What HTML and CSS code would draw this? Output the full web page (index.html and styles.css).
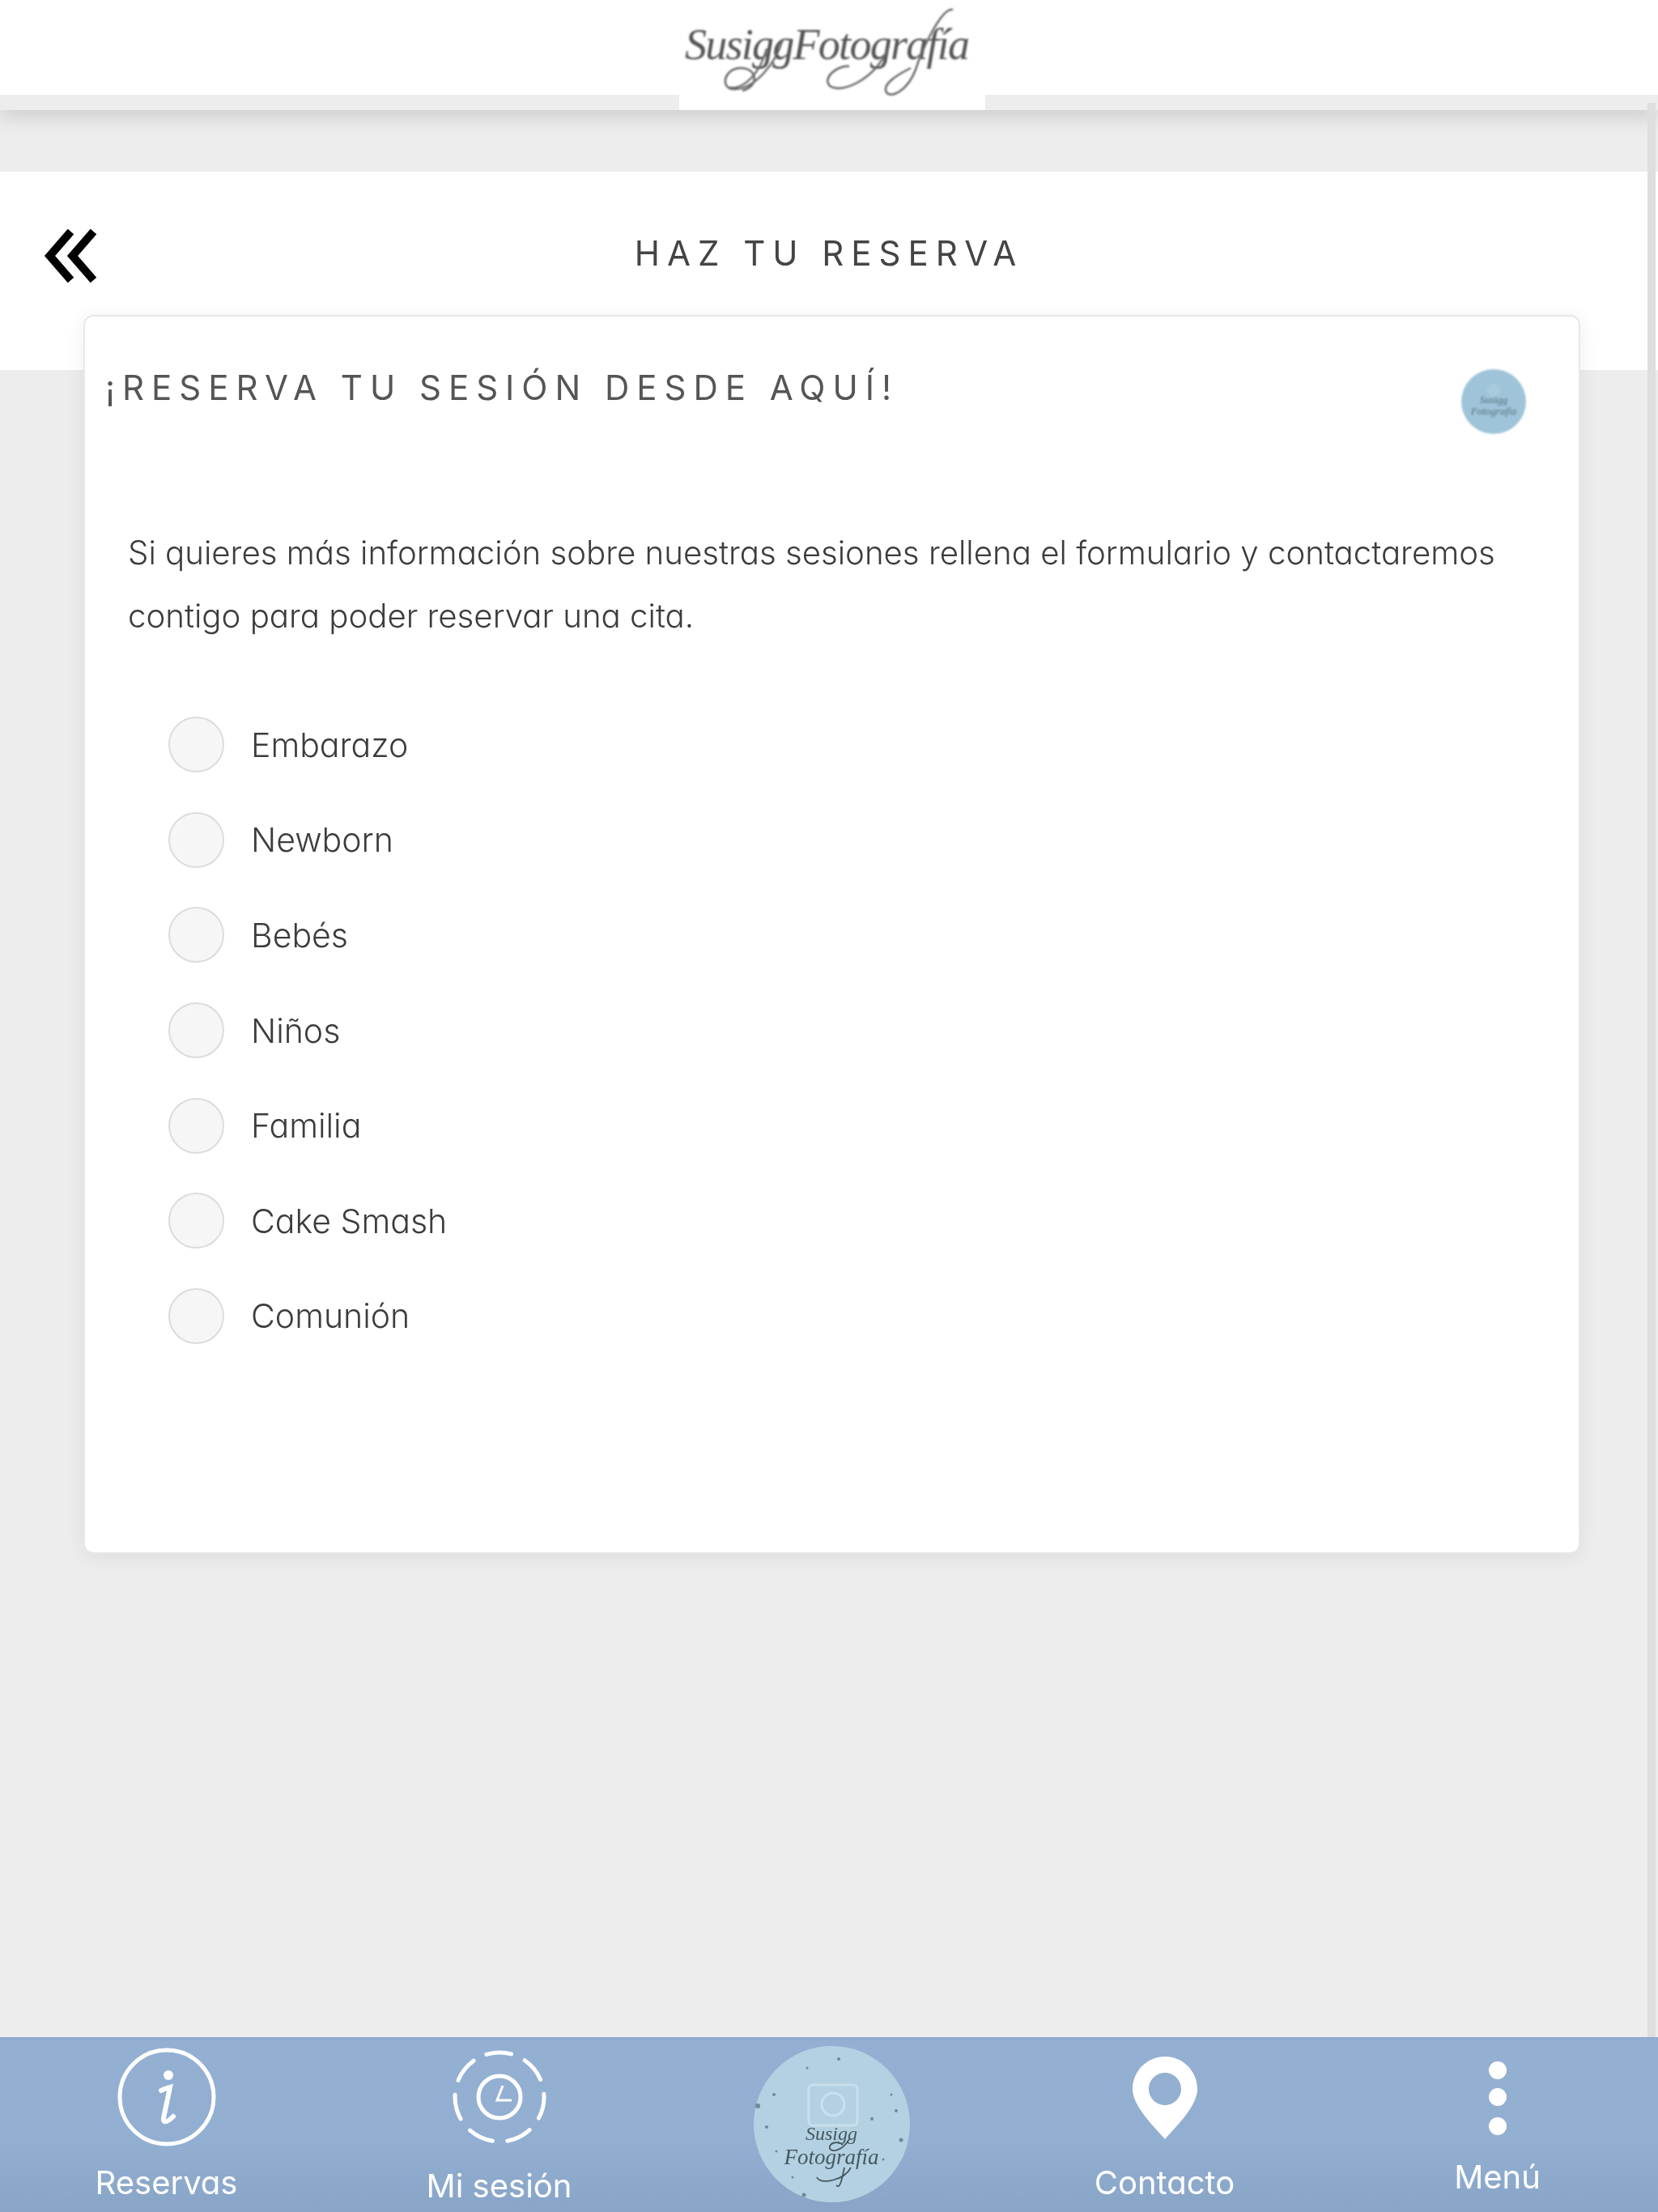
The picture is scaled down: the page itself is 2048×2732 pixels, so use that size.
FILE: index.html
```html
<!DOCTYPE html>
<html lang="es">
<head>
<meta charset="utf-8">
<title>Haz tu reserva</title>
<link rel="stylesheet" href="styles.css">
</head>
<body>
<div class="app">
  <header class="topbar">
    <div class="topbar-white"></div>
    <div class="logo-box">
      <svg class="logo" viewBox="0 0 378 136" aria-label="Susigg Fotografía">
        <text class="logo-text" x="7" y="73" textLength="352" lengthAdjust="spacing">SusiggFotografía</text>
        <path class="logo-swash" d="M128 48C120 78 92 112 66 110C50 108 56 84 76 84C96 84 100 106 78 112M108 60C100 90 80 112 60 108M258 60C240 100 200 116 186 106C176 96 196 80 210 82M338 12C325 8 300 60 292 86C282 112 262 122 256 114C250 104 270 92 286 84" />
      </svg>
    </div>
  </header>

  <div class="scroll-track"></div>

  <section class="title-band">
    <svg class="back" viewBox="0 0 66 68"><path d="M34 4L8 34L34 64M62 4L36 34L62 64"/></svg>
    <h1 class="page-title">HAZ TU RESERVA</h1>
  </section>

  <main class="card">
    <div class="card-head">
      <h2 class="card-title">¡RESERVA TU SESIÓN DESDE AQUÍ!</h2>
      <svg class="mini-avatar" viewBox="0 0 80 80">
        <circle class="mini-disc" cx="40" cy="40" r="40"/>
        <circle class="mini-cam" cx="40" cy="26" r="8"/>
        <text class="mini-text" x="40" y="42">Susigg</text>
        <text class="mini-text" x="40" y="56">Fotografía</text>
      </svg>
    </div>
    <p class="intro">Si quieres más información sobre nuestras sesiones rellena el formulario y contactaremos contigo para poder reservar una cita.</p>
    <ul class="options">
      <li class="option"><span class="radio"></span><span class="option-label">Embarazo</span></li>
      <li class="option"><span class="radio"></span><span class="option-label">Newborn</span></li>
      <li class="option"><span class="radio"></span><span class="option-label">Bebés</span></li>
      <li class="option"><span class="radio"></span><span class="option-label">Niños</span></li>
      <li class="option"><span class="radio"></span><span class="option-label">Familia</span></li>
      <li class="option"><span class="radio"></span><span class="option-label">Cake Smash</span></li>
      <li class="option"><span class="radio"></span><span class="option-label">Comunión</span></li>
    </ul>
  </main>

  <nav class="tabbar">
    <div class="tab">
      <svg class="tab-icon" viewBox="0 0 130 130">
        <circle class="line" cx="65" cy="64" r="58"/>
        <circle class="solid" cx="67" cy="37" r="6"/>
        <path class="line-i" d="M58 56C62 54 66 53 69 52L61 90C60 96 65 96 73 88"/>
      </svg>
      <span class="tab-label">Reservas</span>
    </div>
    <div class="tab">
      <svg class="tab-icon" viewBox="0 0 130 130">
        <circle class="dash-ring" cx="65" cy="64" r="55" transform="rotate(-107 65 64)"/>
        <circle class="line" cx="65" cy="64" r="26"/>
        <path class="hands" d="M69 50L62 68H80"/>
      </svg>
      <span class="tab-label tab-label-low">Mi sesión</span>
    </div>
    <div class="tab">
      <svg class="hub" viewBox="0 0 193 193">
        <circle class="hub-disc" cx="96.500" cy="96.500" r="96.500"/>
        <g class="hub-dots">
          <circle cx="105" cy="16" r="2"/><circle cx="66" cy="27" r="1.500"/><circle cx="25" cy="60" r="2"/>
          <circle cx="5" cy="74" r="3"/><circle cx="16" cy="100" r="2"/><circle cx="28" cy="130" r="1.500"/>
          <circle cx="170" cy="60" r="1.500"/><circle cx="176" cy="80" r="2"/><circle cx="146" cy="90" r="2"/>
          <circle cx="182" cy="116" r="2.500"/><circle cx="48" cy="162" r="1.500"/><circle cx="62" cy="184" r="2.500"/>
          <circle cx="160" cy="140" r="1.500"/>
        </g>
        <g class="hub-cam">
          <rect x="68" y="48" width="60" height="50" rx="5"/>
          <circle cx="98" cy="72" r="14"/>
        </g>
        <text class="hub-text" x="96" y="116">Susigg</text>
        <text class="hub-text hub-text-big" x="96" y="146">Fotografía</text>
        <path class="hub-swash" d="M118 115C108 132 92 132 94 124C96 118 106 118 110 122M120 150C112 166 82 172 78 162M112 150C108 170 106 176 102 172"/>
      </svg>
    </div>
    <div class="tab">
      <svg class="tab-icon" viewBox="0 0 130 130">
        <path class="solid" fill-rule="evenodd" d="M65 14C43 14 25 32 25 54C25 76 53 102 65 116C77 102 105 76 105 54C105 32 87 14 65 14ZM65 34C76 34 85 43 85 54C85 65 76 74 65 74C54 74 45 65 45 54C45 43 54 34 65 34Z"/>
      </svg>
      <span class="tab-label">Contacto</span>
    </div>
    <div class="tab">
      <svg class="tab-icon" viewBox="0 0 130 130">
        <circle class="solid" cx="65" cy="31" r="11"/>
        <circle class="solid" cx="65" cy="64" r="11"/>
        <circle class="solid" cx="65" cy="100" r="11"/>
      </svg>
      <span class="tab-label tab-label-high">Menú</span>
    </div>
  </nav>
</div>
</body>
</html>
```

FILE: styles.css
```css
* { box-sizing: border-box; }
html, body { margin: 0; padding: 0; }
body { background: #ededed; font-family: "Inter", "Lato", "Liberation Sans", sans-serif; }

.app {
  position: relative;
  width: 2048px;
  height: 2732px;
  overflow: hidden;
  display: flex;
  flex-direction: column;
  background: #ededed;
  font-feature-settings: "cv11" 1;
}

/* top bar */
.topbar {
  position: relative;
  height: 136px;
  flex: none;
  background: #ededed;
  box-shadow: 0 8px 24px rgba(0, 0, 0, .14);
}
.topbar-white { height: 117px; background: #fff; }
.logo-box {
  position: absolute;
  left: 839px;
  top: 0;
  width: 378px;
  height: 136px;
  background: #fff;
}
.logo { display: block; width: 378px; height: 136px; filter: blur(1.2px); }
.logo-text { font-family: "Liberation Serif", serif; font-style: italic; font-size: 54px; fill: #555; }
.logo-swash { fill: none; stroke: #666; stroke-width: 2.500; }

.scroll-track {
  position: absolute;
  left: 2035px;
  top: 127px;
  width: 10px;
  height: 2389px;
  background: #dedede;
  z-index: 3;
}

/* title band */
.title-band {
  flex: none;
  height: 245px;
  margin-top: 76px;
  background: #fff;
  display: grid;
  grid-template-columns: 1fr auto 1fr;
  align-items: start;
  padding-top: 71px;
}
.back { width: 69px; height: 68px; margin: -1px 0 0 52px; display: block; }
.back path { fill: none; stroke: #000; stroke-width: 10; }
.page-title {
  margin: 0;
  font-size: 42px;
  line-height: 60px;
  font-weight: 400;
  letter-spacing: 9px;
  color: #444;
  filter: blur(.7px);
}

/* card */
.card {
  position: relative;
  flex: none;
  width: 1849px;
  height: 1530px;
  margin: -68px 0 0 103px;
  background: #fff;
  border: 2px solid #e8e8e8;
  border-radius: 12px;
  box-shadow: 0 4px 24px rgba(0, 0, 0, .07);
}
.card-head {
  display: flex;
  justify-content: space-between;
  align-items: flex-start;
  padding: 60px 65px 0 25px;
}
.card-title {
  margin: 0;
  font-size: 42px;
  line-height: 56px;
  font-weight: 400;
  letter-spacing: 9px;
  color: #555;
  filter: blur(.7px);
}
.mini-avatar { width: 80px; height: 80px; margin-top: 5px; filter: blur(.8px); }
.mini-disc { fill: #9fc4d9; }
.mini-cam { fill: #a9cbde; }
.mini-text { font-family: "Liberation Serif", serif; font-style: italic; font-size: 13px; fill: #55707f; text-anchor: middle; }

.intro {
  margin: 108px 0 0 53px;
  width: 1740px;
  font-size: 40.200px;
  line-height: 78px;
  font-weight: 300;
  color: #3c3c3c;
  filter: blur(.7px);
}

.options { list-style: none; margin: 61px 0 0 103px; padding: 0; }
.option { height: 117.600px; display: flex; align-items: center; }
.radio {
  flex: none;
  width: 69px;
  height: 69px;
  border-radius: 50%;
  background: #f6f6f6;
  border: 2px solid #dcdcdc;
}
.option-label {
  margin-left: 33px;
  font-size: 41px;
  font-weight: 300;
  color: #3c3c3c;
  filter: blur(.7px);
}

/* tab bar */
.tabbar {
  margin-top: auto;
  flex: none;
  height: 216px;
  display: grid;
  grid-template-columns: repeat(5, 411px);
  background: linear-gradient(#8ea9cf 0, #93b0d3 6px, #92afd2 60%, #88a4c6 100%);
  z-index: 4;
}
.tab { display: flex; flex-direction: column; align-items: center; padding-top: 10px; }
.tab-icon { display: block; flex: none; width: 130px; height: 130px; }
.tab-label {
  margin-top: 15px;
  font-size: 40px;
  line-height: 50px;
  font-weight: 400;
  color: #fff;
  filter: blur(.6px);
}
.tab-label-low { margin-top: 19px; }
.tab-label-high { margin-top: 8px; }
.line { fill: none; stroke: #fff; stroke-width: 5; }
.line-i { fill: none; stroke: #fff; stroke-width: 6; stroke-linecap: round; }
.solid { fill: #fff; }
.dash-ring { fill: none; stroke: #fff; stroke-width: 5; stroke-linecap: round; stroke-dasharray: 31 18.370; }
.hands { fill: none; stroke: #fff; stroke-width: 3; }

.hub { display: block; width: 193px; height: 193px; margin-top: 1px; filter: blur(.7px); }
.hub-disc { fill: #b3d1e3; }
.hub-dots circle { fill: #6d8a99; }
.hub-cam { fill: none; stroke: #c9e0ec; stroke-width: 3; }
.hub-text { font-family: "Liberation Serif", serif; font-style: italic; font-size: 24px; fill: #46585f; text-anchor: middle; }
.hub-text-big { font-size: 27px; }
.hub-swash { fill: none; stroke: #46585f; stroke-width: 1.800; }
```
